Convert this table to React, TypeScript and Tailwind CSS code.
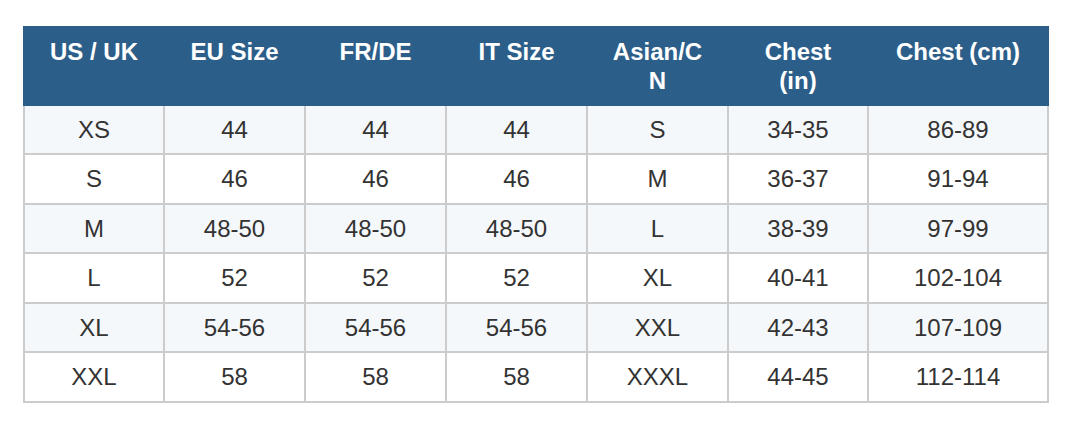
import React from "react";

const headers = ["US / UK", "EU Size", "FR/DE", "IT Size", "Asian/C N", "Chest (in)", "Chest (cm)"];
const rows = [
  ["XS", "44", "44", "44", "S", "34-35", "86-89"],
  ["S", "46", "46", "46", "M", "36-37", "91-94"],
  ["M", "48-50", "48-50", "48-50", "L", "38-39", "97-99"],
  ["L", "52", "52", "52", "XL", "40-41", "102-104"],
  ["XL", "54-56", "54-56", "54-56", "XXL", "42-43", "107-109"],
  ["XXL", "58", "58", "58", "XXXL", "44-45", "112-114"],
];
const widths = ["w-[140px]", "w-[141px]", "w-[141px]", "w-[141px]", "w-[141px]", "w-[140px]", "w-[180px]"];

export default function App() {
  return (
    <div className="min-h-[422px] w-[1069px] bg-white pl-[23px] pt-[26px]" style={{ fontFamily: '"Liberation Sans", Arial, sans-serif' }}>
      <table className="w-[1026px] table-fixed border-collapse border-2 border-[#cccccc] text-[24px]">
        <colgroup>
          {widths.map((w, i) => (
            <col key={i} className={w} />
          ))}
        </colgroup>
        <thead>
          <tr className="bg-[#2c5e8a]">
            {headers.map((h, i) => (
              <th
                key={i}
                className="border-2 border-[#2c5e8a] px-[12px] pt-[10px] pb-[8px] text-center align-top font-bold leading-[28.8px] text-white"
              >
                {h === "Asian/C N" ? (
                  <>
                    Asian/C
                    <br />N
                  </>
                ) : h === "Chest (in)" ? (
                  <>
                    Chest
                    <br />
                    (in)
                  </>
                ) : (
                  h
                )}
              </th>
            ))}
          </tr>
        </thead>
        <tbody>
          {rows.map((r, ri) => (
            <tr key={ri} className={ri % 2 === 0 ? "bg-[#f5f8fb]" : "bg-white"}>
              {r.map((c, ci) => (
                <td
                  key={ci}
                  className="border-2 border-[#cccccc] px-[12px] pt-[10.35px] pb-[8.35px] text-center align-middle leading-[28.8px] text-[#333333]"
                >
                  {c}
                </td>
              ))}
            </tr>
          ))}
        </tbody>
      </table>
    </div>
  );
}
